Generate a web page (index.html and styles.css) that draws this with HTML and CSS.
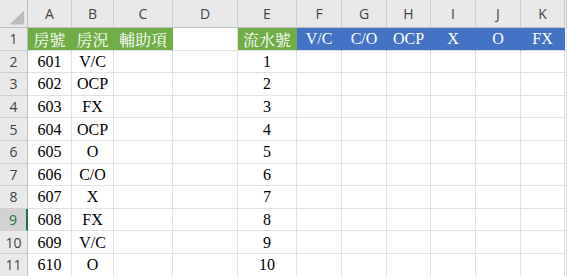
FILE: index.html
```html
<!DOCTYPE html>
<html>
<head>
<meta charset="utf-8">
<link rel="stylesheet" href="styles.css">
</head>
<body>
<div class="sheet">
  <div class="corner"><svg width="28" height="28" viewBox="0 0 28 28"><polygon points="25,10 25,25 10,25" fill="#bcbcbc"/></svg></div>
  <div class="ch">A</div><div class="ch">B</div><div class="ch">C</div><div class="ch">D</div><div class="ch">E</div><div class="ch">F</div><div class="ch">G</div><div class="ch">H</div><div class="ch">I</div><div class="ch">J</div><div class="ch">K</div><div class="ch last"></div>

  <div class="rh">1</div>
  <div class="c green">房號</div><div class="c green">房況</div><div class="c green">輔助項</div><div class="c"></div><div class="c green">流水號</div>
  <div class="c blue">V/C</div><div class="c blue">C/O</div><div class="c blue">OCP</div><div class="c blue">X</div><div class="c blue">O</div><div class="c blue">FX</div><div class="c"></div>

  <div class="rh">2</div>
  <div class="c">601</div><div class="c">V/C</div><div class="c"></div><div class="c"></div><div class="c">1</div>
  <div class="c"></div><div class="c"></div><div class="c"></div><div class="c"></div><div class="c"></div><div class="c"></div><div class="c"></div>

  <div class="rh">3</div>
  <div class="c">602</div><div class="c">OCP</div><div class="c"></div><div class="c"></div><div class="c">2</div>
  <div class="c"></div><div class="c"></div><div class="c"></div><div class="c"></div><div class="c"></div><div class="c"></div><div class="c"></div>

  <div class="rh">4</div>
  <div class="c">603</div><div class="c">FX</div><div class="c"></div><div class="c"></div><div class="c">3</div>
  <div class="c"></div><div class="c"></div><div class="c"></div><div class="c"></div><div class="c"></div><div class="c"></div><div class="c"></div>

  <div class="rh">5</div>
  <div class="c">604</div><div class="c">OCP</div><div class="c"></div><div class="c"></div><div class="c">4</div>
  <div class="c"></div><div class="c"></div><div class="c"></div><div class="c"></div><div class="c"></div><div class="c"></div><div class="c"></div>

  <div class="rh">6</div>
  <div class="c">605</div><div class="c">O</div><div class="c"></div><div class="c"></div><div class="c">5</div>
  <div class="c"></div><div class="c"></div><div class="c"></div><div class="c"></div><div class="c"></div><div class="c"></div><div class="c"></div>

  <div class="rh">7</div>
  <div class="c">606</div><div class="c">C/O</div><div class="c"></div><div class="c"></div><div class="c">6</div>
  <div class="c"></div><div class="c"></div><div class="c"></div><div class="c"></div><div class="c"></div><div class="c"></div><div class="c"></div>

  <div class="rh">8</div>
  <div class="c">607</div><div class="c">X</div><div class="c"></div><div class="c"></div><div class="c">7</div>
  <div class="c"></div><div class="c"></div><div class="c"></div><div class="c"></div><div class="c"></div><div class="c"></div><div class="c"></div>

  <div class="rh sel">9</div>
  <div class="c">608</div><div class="c">FX</div><div class="c"></div><div class="c"></div><div class="c">8</div>
  <div class="c"></div><div class="c"></div><div class="c"></div><div class="c"></div><div class="c"></div><div class="c"></div><div class="c"></div>

  <div class="rh">10</div>
  <div class="c">609</div><div class="c">V/C</div><div class="c"></div><div class="c"></div><div class="c">9</div>
  <div class="c"></div><div class="c"></div><div class="c"></div><div class="c"></div><div class="c"></div><div class="c"></div><div class="c"></div>

  <div class="rh">11</div>
  <div class="c">610</div><div class="c">O</div><div class="c"></div><div class="c"></div><div class="c">10</div>
  <div class="c"></div><div class="c"></div><div class="c"></div><div class="c"></div><div class="c"></div><div class="c"></div><div class="c"></div>
</div>
</body>
</html>
```
FILE: styles.css
```css
html, body {
  margin: 0;
  padding: 0;
  background: #ffffff;
  overflow: hidden;
}
.sheet {
  width: 567px;
  height: 276px;
  overflow: hidden;
  display: grid;
  grid-template-columns: 28px 44px 42px 59px 65px 59px 45px 45px 44px 45px 45px 44px 1fr;
  grid-template-rows: 28px repeat(11, 22.6px);
}
.sheet > div {
  box-sizing: border-box;
  display: flex;
  align-items: center;
  justify-content: center;
  overflow: hidden;
  white-space: nowrap;
}
.corner {
  background: #e9e9e9;
  border-right: 1px solid #bdbdbd;
  border-bottom: 1px solid #bdbdbd;
}
.corner svg { display: block; }
.ch {
  background: #e9e9e9;
  color: #444444;
  font-family: "Open Sans", "Liberation Sans", sans-serif;
  font-size: 14px;
  border-right: 1px solid #d0d0d0;
  border-bottom: 1px solid #bdbdbd;
}
.rh {
  background: #e9e9e9;
  color: #444444;
  font-family: "Open Sans", "Liberation Sans", sans-serif;
  font-size: 14px;
  border-right: 1px solid #bdbdbd;
  border-bottom: 1px solid #d0d0d0;
}
.rh.sel {
  background: #d2d2d2;
  color: #217346;
  border-right: 2px solid #217346;
}
.c {
  font-family: "Liberation Serif", "Noto Serif CJK TC", "Noto Sans CJK TC", serif;
  font-size: 16px;
  color: #000000;
  padding-top: 1px;
  border-right: 1px solid #e1e1e1;
  border-bottom: 1px solid #e1e1e1;
}
.c.green {
  background: #70ad47;
  color: #ffffff;
  border-right-color: #70ad47;
}
.c.blue {
  background: #4472c4;
  color: #ffffff;
  border-right-color: #4472c4;
}
```
